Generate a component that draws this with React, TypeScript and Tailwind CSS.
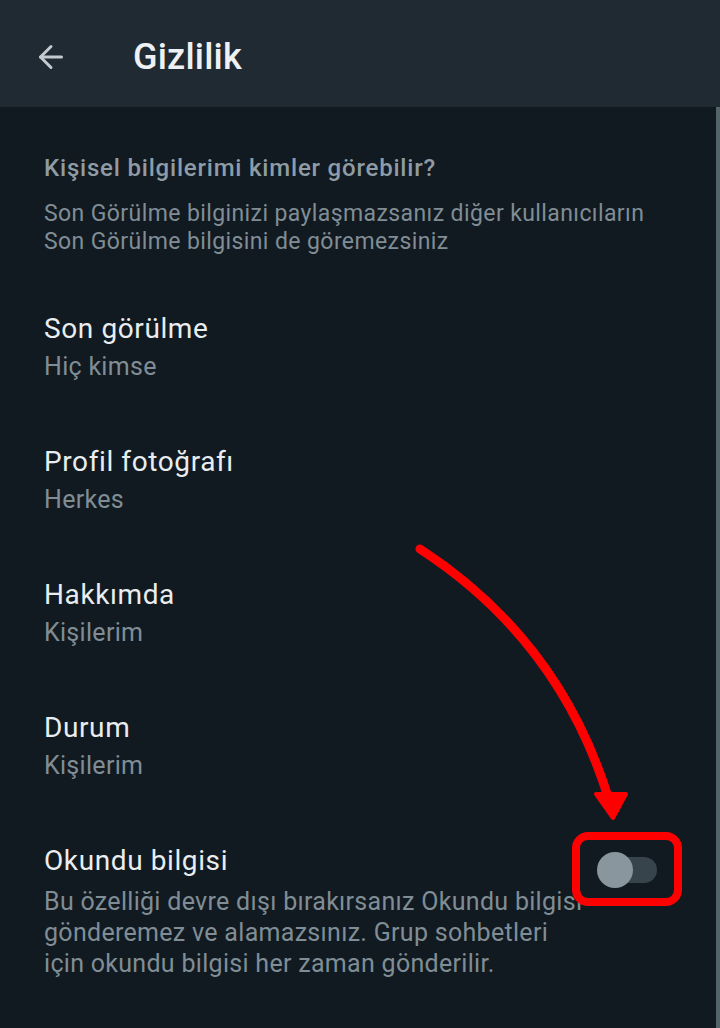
import { ArrowLeft } from "lucide-react";

const font = { fontFamily: "Roboto, 'Noto Sans', sans-serif" };

type Item = { title: string; value: string };

const items: Item[] = [
  { title: "Son görülme", value: "Hiç kimse" },
  { title: "Profil fotoğrafı", value: "Herkes" },
  { title: "Hakkımda", value: "Kişilerim" },
  { title: "Durum", value: "Kişilerim" },
];

function Toggle() {
  return (
    <div className="relative w-[62px] h-[38px] flex items-center">
      <div className="ml-[18px] w-[42px] h-[26px] rounded-full bg-[#37444c]" />
      <div className="absolute left-0 top-[1px] w-[36px] h-[36px] rounded-full bg-[#8a969e]" />
    </div>
  );
}

export default function App() {
  return (
    <div className="relative w-[720px] h-[1028px] overflow-hidden bg-[#111a21] flex flex-col" style={font}>
      <header className="h-[107px] shrink-0 bg-[#1f2a33] flex items-center pl-[33px] pt-[6px]">
        <ArrowLeft className="w-[36px] h-[36px] text-[#c4cbd0]" strokeWidth={2} />
        <h1 className="ml-[64px] text-[36px] font-medium text-[#eef1f3] tracking-[0.2px]">Gizlilik</h1>
      </header>

      <div className="flex flex-1">
        <main className="flex-1 pl-[44px] pr-[40px]">
          <section className="pt-[45px]">
            <h2 className="text-[24px] font-medium text-[#8f9ca5] leading-[32px] tracking-[0.8px]">
              Kişisel bilgilerimi kimler görebilir?
            </h2>
            <p className="mt-[16px] text-[23px] text-[#808d95] leading-[28px] tracking-[0.4px]">
              Son Görülme bilginizi paylaşmazsanız diğer kullanıcıların
              <br />
              Son Görülme bilgisini de göremezsiniz
            </p>
          </section>

          <div className="mt-[54px] flex flex-col">
            {items.map((it) => (
              <div key={it.title} className="h-[133px] flex flex-col">
                <div className="text-[28px] text-[#e9edef] leading-[38px] tracking-[0.6px]">{it.title}</div>
                <div className="text-[25px] text-[#808d95] leading-[38px] tracking-[0.3px]">{it.value}</div>
              </div>
            ))}

            <div className="flex items-start justify-between">
              <div className="w-[520px] shrink-0">
                <div className="text-[28px] text-[#e9edef] leading-[38px] tracking-[0.6px]">Okundu bilgisi</div>
                <p className="mt-[6px] text-[25px] text-[#808d95] leading-[31px] tracking-[0.3px] whitespace-nowrap">
                  Bu özelliği devre dışı bırakırsanız Okundu bilgisi
                  <br />
                  gönderemez ve alamazsınız. Grup sohbetleri
                  <br />
                  için okundu bilgisi her zaman gönderilir.
                </p>
              </div>
              <div className="mt-[9px] mr-[17px] relative z-10">
                <Toggle />
              </div>
            </div>
          </div>
        </main>
        <div className="w-[4px] bg-[#55636b]" />
      </div>

      <svg className="absolute left-0 top-0 pointer-events-none" width="720" height="1028" viewBox="0 0 720 1028">
        <path d="M420 549 Q560 640 609 800" fill="none" stroke="#ff0000" strokeWidth="9" strokeLinecap="round" />
        <path d="M596 794 L626 794 L613 818 Z" fill="#ff0000" stroke="#ff0000" strokeWidth="4" strokeLinejoin="round" />
        <rect x="576" y="836" width="102" height="66" rx="12" fill="none" stroke="#ff0000" strokeWidth="8" />
      </svg>
    </div>
  );
}
